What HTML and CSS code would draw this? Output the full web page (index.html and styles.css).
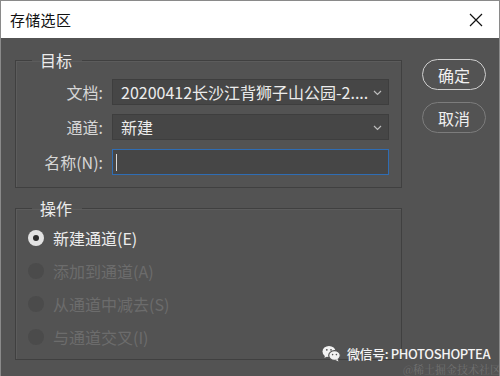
FILE: index.html
```html
<!DOCTYPE html>
<html lang="zh-CN">
<head>
    <meta charset="UTF-8">
    <title>存储选区</title>
    <link rel="stylesheet" href="styles.css">
</head>
<body>
    <div class="window">
        <div class="titlebar">
            <span class="title">存储选区</span>
            <svg class="close" width="14" height="14" viewBox="0 0 14 14">
                <path d="M1 1 L13 13 M13 1 L1 13" stroke="#111" stroke-width="1.2" fill="none"/>
            </svg>
        </div>

        <div class="dialog-body">
            <div class="left">
                <fieldset class="group">
                    <legend>目标</legend>
                    <div class="row">
                        <label class="row-label">文档:</label>
                        <div class="select">
                            <span class="select-text">20200412长沙江背狮子山公园-2....</span>
                            <svg class="chevron" width="9" height="6" viewBox="0 0 9 6">
                                <path d="M1 1 L4.5 4.5 L8 1" stroke="#bdbdbd" stroke-width="1.2" fill="none"/>
                            </svg>
                        </div>
                    </div>
                    <div class="row">
                        <label class="row-label">通道:</label>
                        <div class="select">
                            <span class="select-text">新建</span>
                            <svg class="chevron" width="9" height="6" viewBox="0 0 9 6">
                                <path d="M1 1 L4.5 4.5 L8 1" stroke="#bdbdbd" stroke-width="1.2" fill="none"/>
                            </svg>
                        </div>
                    </div>
                    <div class="row">
                        <label class="row-label">名称(N):</label>
                        <div class="input"><span class="caret"></span></div>
                    </div>
                </fieldset>

                <fieldset class="group ops">
                    <legend>操作</legend>
                    <div class="radio-row">
                        <span class="radio checked"></span>
                        <span class="radio-label">新建通道(E)</span>
                    </div>
                    <div class="radio-row disabled">
                        <span class="radio"></span>
                        <span class="radio-label">添加到通道(A)</span>
                    </div>
                    <div class="radio-row disabled">
                        <span class="radio"></span>
                        <span class="radio-label">从通道中减去(S)</span>
                    </div>
                    <div class="radio-row disabled">
                        <span class="radio"></span>
                        <span class="radio-label">与通道交叉(I)</span>
                    </div>
                </fieldset>
            </div>

            <div class="buttons">
                <button class="btn primary">确定</button>
                <button class="btn">取消</button>
            </div>
        </div>

        <div class="watermark">
            <svg class="wechat" width="19" height="17" viewBox="0 0 19 17">
                <ellipse cx="7" cy="6.5" rx="6.5" ry="5.5" fill="#f2f2f2"/>
                <path d="M3 10 L2.5 13 L5.5 11 Z" fill="#f2f2f2"/>
                <ellipse cx="12.5" cy="10.5" rx="5.8" ry="4.8" fill="#f2f2f2" stroke="#535353" stroke-width="1.2"/>
                <path d="M15.5 14 L16.5 16.5 L13.5 15 Z" fill="#f2f2f2"/>
                <circle cx="4.8" cy="4.8" r="0.9" fill="#535353"/>
                <circle cx="9" cy="4.8" r="0.9" fill="#535353"/>
                <circle cx="10.6" cy="9.6" r="0.8" fill="#535353"/>
                <circle cx="14.4" cy="9.6" r="0.8" fill="#535353"/>
            </svg>
            <span class="wm-text">微信号: PHOTOSHOPTEA</span>
        </div>
        <div class="juejin">@稀土掘金技术社区</div>
    </div>
</body>
</html>
```

FILE: styles.css
```css
:root {
    --panel: #535353;
    --field: #464646;
    --line: #404040;
    --text: #ececec;
    --muted: #6c6c6c;
}

body {
    margin: 0;
    font-family: "Noto Sans CJK SC", "Noto Sans", sans-serif;
}

.window {
    position: relative;
    width: 500px;
    height: 376px;
    box-sizing: border-box;
    border: 1px solid #8a8a8a;
    border-bottom: none;
    background-color: var(--panel);
    overflow: hidden;
}

.titlebar {
    height: 37px;
    background: #fff;
    display: flex;
    align-items: center;
    justify-content: space-between;
    padding: 0 16px 0 9px;
}

.title {
    font-size: 15px;
    color: #111;
    letter-spacing: 0.3px;
}

.dialog-body {
    display: flex;
    padding: 11px 0 0 14px;
}

.left {
    width: 387px;
}

.group {
    margin: 0;
    padding: 8px 0 12px 0;
    border: 1px solid var(--line);
    box-shadow: inset 1px 1px 0 #5c5c5c;
}

.group legend {
    margin-left: 16px;
    padding: 0 10px 0 8px;
    font-size: 16px;
    line-height: 22px;
    color: var(--text);
}

.row {
    display: flex;
    align-items: center;
    height: 26px;
    margin-bottom: 9px;
}

.row:last-child {
    margin-bottom: 0;
}

.row-label {
    width: 87px;
    text-align: right;
    font-size: 16px;
    color: #d6d6d6;
    padding-right: 9px;
}

.select,
.input {
    width: 277px;
    height: 26px;
    box-sizing: border-box;
    background: var(--field);
    border: 1px solid #3e3e3e;
    display: flex;
    align-items: center;
    padding: 0 6px 0 8px;
}

.select-text {
    flex: 1;
    font-size: 16px;
    color: var(--text);
    white-space: nowrap;
    overflow: hidden;
}

.chevron {
    margin-top: 2px;
}

.input {
    border-color: #2f6db4;
    padding-left: 3px;
}

.caret {
    width: 1px;
    height: 17px;
    background: #d8d8d8;
}

.ops {
    margin-top: 9px;
    padding: 2px 0 6px 0;
}

.radio-row {
    display: flex;
    align-items: center;
    height: 33px;
    padding-left: 12px;
}

.radio {
    width: 16px;
    height: 16px;
    border-radius: 50%;
    background: #4b4b4b;
    box-sizing: border-box;
    margin-right: 9px;
    display: flex;
    align-items: center;
    justify-content: center;
}

.radio.checked {
    background: #e2e2e2;
}

.radio.checked::after {
    content: "";
    width: 6px;
    height: 6px;
    border-radius: 50%;
    background: #2b2b2b;
}

.radio-label {
    font-size: 16px;
    color: var(--text);
}

.radio-row.disabled .radio-label {
    color: var(--muted);
}

.buttons {
    display: flex;
    flex-direction: column;
    gap: 12px;
    margin: 10px 0 0 20px;
}

.btn {
    width: 64px;
    height: 31px;
    border-radius: 16px;
    background: transparent;
    border: 1.5px solid #7c7c7c;
    color: #f0f0f0;
    font-family: inherit;
    font-size: 16px;
    padding: 0;
}

.btn.primary {
    border-color: #cfcfcf;
}

.watermark {
    position: absolute;
    left: 321px;
    top: 344px;
    display: flex;
    align-items: center;
    gap: 6px;
    white-space: nowrap;
}

.wm-text {
    font-size: 13px;
    line-height: 17px;
    font-weight: 500;
    color: #f4f4f4;
    letter-spacing: -0.4px;
}

.juejin {
    position: absolute;
    left: 402px;
    top: 362px;
    font-size: 11px;
    line-height: 13px;
    color: #707070;
    white-space: nowrap;
    font-family: "Noto Serif CJK SC", "Noto Sans CJK SC", serif;
}
```
